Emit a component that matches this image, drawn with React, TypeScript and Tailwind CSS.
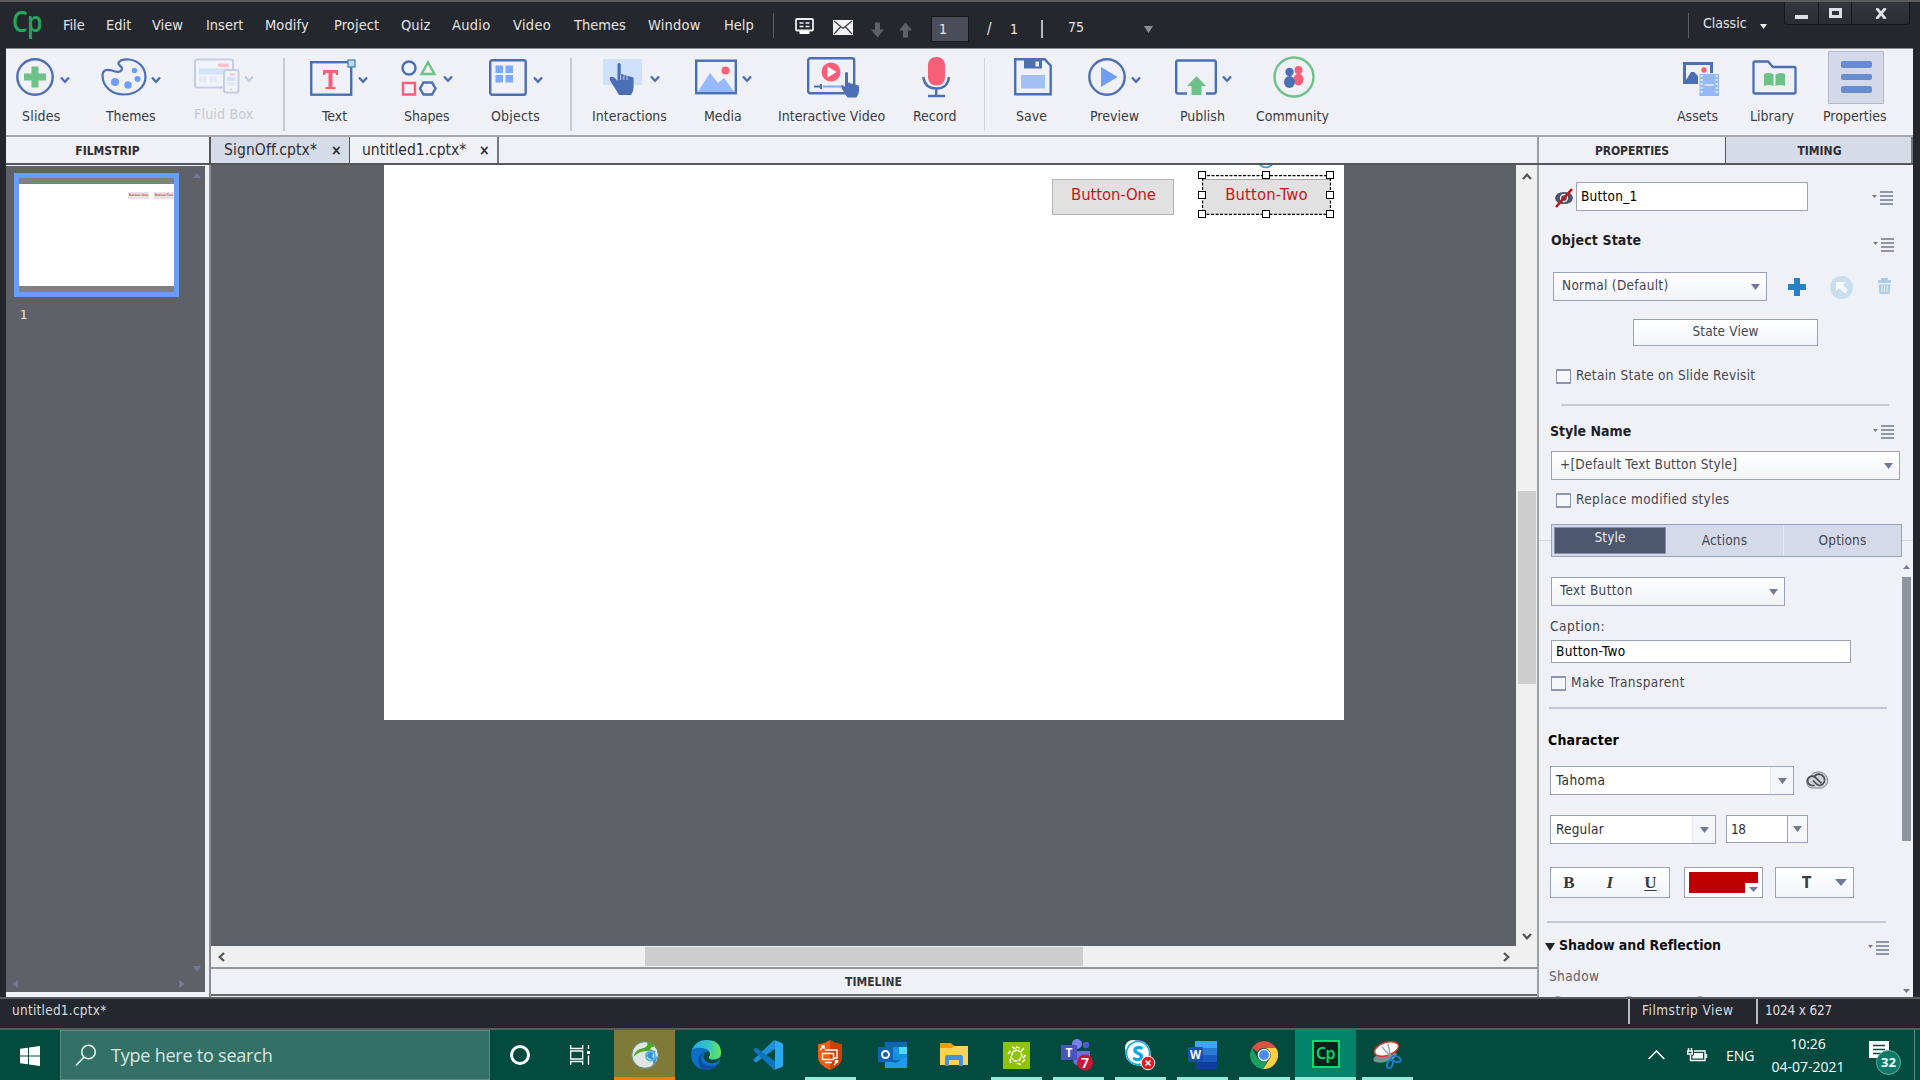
import React from "react";

type Kids = { children?: React.ReactNode; className?: string };

const BLUE = "#4a6fb5";
const GREEN = "#6cc287";
const RED = "#f75f78";

/* ---------- small shared pieces ---------- */

function Chevron({ className = "", color = BLUE }: { className?: string; color?: string }) {
  return (
    <svg className={"shrink-0 " + className} width="10" height="8" viewBox="0 0 10 8" fill="none" stroke={color} strokeWidth="2.4">
      <path d="M1 1.5 5 5.8 9 1.5" />
    </svg>
  );
}

function Caret({ className = "", w = 9, h = 6, color = "#6f7a98" }: { className?: string; w?: number; h?: number; color?: string }) {
  return (
    <svg className={"shrink-0 " + className} width={w} height={h} viewBox="0 0 10 7" preserveAspectRatio="none">
      <path d="M0 0h10L5 7z" fill={color} />
    </svg>
  );
}

function ListMenu({ className = "" }: { className?: string }) {
  return (
    <svg className={"shrink-0 " + className} width="22" height="14" viewBox="0 0 22 14">
      <path d="M0 4h5L2.5 7z" fill="#6f7a98" />
      <path d="M8 1h13M8 5h13M8 9h13M8 13h13" stroke="#6f7890" strokeWidth="1.3" />
    </svg>
  );
}

function Check({ className = "" }: { className?: string }) {
  return <div className={"size-[15px] shrink-0 border border-[#8e96ae] border-y-2 bg-[#f6f7fb] " + className} />;
}

function Rule({ className = "" }: { className?: string }) {
  return <div className={"h-[2px] shrink-0 bg-[#c6c9d4] " + className} />;
}

function Select({ className = "", children }: Kids) {
  return (
    <div className={"flex h-[29px] shrink-0 items-center justify-between border border-[#99a2b9] bg-linear-to-b from-white to-[#f1f3f8] pr-[6px] pl-[8px] leading-[26px] " + className}>
      <span className="-mt-[3px] whitespace-nowrap">{children}</span>
      <Caret />
    </div>
  );
}

/* ---------- title bar ---------- */

function TitleBar() {
  return (
    <header className="flex h-[48px] shrink-0 items-start border-t-2 border-[#5b5b5d] bg-[#24272e] text-[15px] leading-[20px] text-[#e4e4e4]">
      <div className="mt-[3px] ml-[12px] w-[51px] font-['Open_Sans'] text-[29px] leading-[32px] font-semibold tracking-[-1px] text-[#26a65b]">
        <span className="inline-block origin-left scale-x-[.86]">Cp</span>
      </div>
      <nav className="mt-[13px] flex h-[20px] text-[14.5px]">
        <span className="w-[43px]">File</span>
        <span className="w-[46px]">Edit</span>
        <span className="w-[54px]">View</span>
        <span className="w-[59px]">Insert</span>
        <span className="w-[69px] tracking-[.1px]">Modify</span>
        <span className="w-[67px] tracking-[.1px]">Project</span>
        <span className="w-[51px] tracking-[.1px]">Quiz</span>
        <span className="w-[61px] tracking-[.3px]">Audio</span>
        <span className="w-[61px] tracking-[.3px]">Video</span>
        <span className="w-[74px]">Themes</span>
        <span className="w-[76px] tracking-[.2px]">Window</span>
        <span className="w-[49px]">Help</span>
      </nav>
      <div className="mt-[11px] h-[25px] w-px bg-[#5c5e64]" />
      <svg className="mt-[16px] ml-[21px]" width="19" height="17" viewBox="0 0 19 17">
        <rect x="1" y="1" width="17" height="11.500" rx="1" fill="none" stroke="#eee" strokeWidth="1.8" />
        <path d="M4.500 5h4M10.500 5h4M4.500 8.500h4M10.500 8.500h4" stroke="#eee" strokeWidth="1.7" />
        <path d="M4.500 13h10v3h-10z" fill="#fff" />
      </svg>
      <svg className="mt-[18px] ml-[19px]" width="20" height="15" viewBox="0 0 20 15">
        <rect width="20" height="15" fill="#f2f2f2" />
        <path d="M1 1l9 7.500L19 1M1 14l6.500-7M19 14l-6.500-7" fill="none" stroke="#3a3c42" strokeWidth="1.2" />
      </svg>
      <svg className="mt-[20px] ml-[18px]" width="13" height="16" viewBox="0 0 13 15"><path d="M4 0h5v7h4l-6.500 8L0 7h4z" fill="#5f6065" /></svg>
      <svg className="mt-[20px] ml-[15px]" width="13" height="16" viewBox="0 0 13 15"><path d="M4 15h5V8h4L6.500 0 0 8h4z" fill="#5f6065" /></svg>
      <div className="mt-[14px] ml-[19px] h-[26px] w-[38px] border border-[#15171b] bg-[#4b4e5a] pl-[7px] text-[14px] leading-[24px]">1</div>
      <span className="mt-[17px] ml-[18px] w-[23px]">/</span>
      <span className="mt-[17px] w-[31px] text-[14px]">1</span>
      <div className="mt-[18px] h-[18px] w-[2px] bg-[#b8b8ba]" />
      <span className="mt-[15px] ml-[25px] w-[76px] text-[14px]">75</span>
      <Caret className="mt-[24px]" color="#8e9096" w={9} h={7} />
      <div className="mt-[11px] ml-[535px] h-[25px] w-px bg-[#5c5e64]" />
      <span className="mt-[11px] ml-[14px] w-[57px] text-[14px]">Classic</span>
      <Caret className="mt-[22px]" color="#eee" w={7} h={5} />
      <div className="ml-[17px] flex h-[23px] w-[126px] divide-x divide-[#16181c] rounded-b-sm border border-t-0 border-[#16181c] bg-linear-to-b from-[#33383e] to-[#2a2d33]">
        <div className="flex w-[34px] items-end justify-center pr-[1px] pb-[5px]"><div className="h-[4px] w-[13px] bg-[#dde0e8]" /></div>
        <div className="flex w-[33px] items-center justify-center"><div className="h-[10px] w-[13px] border-[3px] border-[#dde0e8]" /></div>
        <div className="flex flex-1 items-center justify-center">
          <svg width="12" height="11" viewBox="0 0 12 11" stroke="#dde0e8" strokeWidth="2.800"><path d="M1.500 0l9 11M10.500 0l-9 11" /></svg>
        </div>
      </div>
    </header>
  );
}

/* ---------- tool bar ---------- */

function Tool({ className = "", iconClass = "", labelClass = "", label, arrow, arrowColor, icon }: {
  className?: string; iconClass?: string; labelClass?: string; label: string; arrow?: string; arrowColor?: string; icon: React.ReactNode;
}) {
  return (
    <div className={"flex shrink-0 flex-col " + className}>
      <div className={"flex h-[54px] items-center " + iconClass}>
        {icon}
        {arrow !== undefined && <Chevron className={arrow} color={arrowColor} />}
      </div>
      <span className={"leading-[24px] whitespace-nowrap " + labelClass}>{label}</span>
    </div>
  );
}

function IconSlides() {
  return (
    <svg width="38" height="38" viewBox="0 0 38 38">
      <circle cx="19" cy="19" r="17.700" fill="none" stroke={BLUE} strokeWidth="2.400" />
      <path d="M15.500 8.500h7v7h7.500v7h-7.500v7h-7v-7H8v-7h7.500z" fill={GREEN} />
    </svg>
  );
}
function IconPalette() {
  return (
    <svg width="46" height="38" viewBox="0 0 46 38">
      <path d="M17.500 5C19 1.500 23 1.200 28 1.500 38 2.500 44.500 10 44.500 19 44.500 29 35 36.500 23 36.500 11 36.500 2 29 1.500 18 1.500 11.500 6 11 11 12.500 16 14.500 20 14.500 21 11 21.500 8 17 8 17.500 5Z" fill="none" stroke={BLUE} strokeWidth="2.200" />
      <circle cx="14" cy="24" r="4" fill="#6f9df8" /><circle cx="27" cy="27" r="3.700" fill="#6f9df8" />
      <circle cx="36.500" cy="21" r="3" fill="#6f9df8" /><circle cx="33.500" cy="12.500" r="2.700" fill="#6f9df8" />
    </svg>
  );
}
function IconFluid() {
  return (
    <svg width="46" height="36" viewBox="0 0 46 36">
      <rect x="1" y="1.500" width="38" height="28" rx="2" fill="#f3f4f9" stroke="#c3cde3" strokeWidth="2" />
      <rect x="24" y="5.500" width="11" height="3.500" fill="#f8c3cf" /><rect x="5" y="10.500" width="30" height="6" fill="#d3e1fa" />
      <path d="M5 18.500h8v6H5zM15 18.500h8v6h-8z" fill="#e2eafa" />
      <rect x="30" y="12" width="14.500" height="22.500" rx="2" fill="#f3f4f9" stroke="#c3cde3" strokeWidth="2" />
      <rect x="36" y="15.500" width="5" height="2" fill="#f8c3cf" /><rect x="33" y="19" width="8.500" height="4" fill="#d3e1fa" />
      <rect x="33" y="24" width="8.500" height="4" fill="#e2eafa" /><circle cx="37.300" cy="31.300" r="1" fill="#c3cde3" />
    </svg>
  );
}
function IconText() {
  return (
    <svg width="46" height="37" viewBox="0 0 46 37">
      <rect x="1.200" y="3.200" width="40" height="32.500" fill="none" stroke={BLUE} strokeWidth="2.400" />
      <path d="M13 11h15v5h-2l-.5-2h-3v14h3v2h-10v-2h3V14h-3L15 16h-2z" fill={RED} />
      <rect x="38" y="1" width="7" height="7" fill="#b8daf2" stroke="#4b86ad" strokeWidth="1.300" />
    </svg>
  );
}
function IconShapes() {
  return (
    <svg width="36" height="36" viewBox="0 0 36 36" fill="none" strokeWidth="2.400">
      <circle cx="8" cy="8" r="6.500" stroke={BLUE} /><path d="M27 2.500 33.500 14h-13z" stroke={GREEN} />
      <path d="M2 23h12v11.500H2z" stroke={RED} /><path d="M22.500 22.500h8.500l3.500 6-3.500 6h-8.500l-3.500-6z" stroke={BLUE} />
    </svg>
  );
}
function IconObjects() {
  return (
    <svg width="38" height="37" viewBox="0 0 38 37">
      <rect x="1.200" y="1.200" width="35.500" height="34.500" rx="2" fill="none" stroke={BLUE} strokeWidth="2.400" />
      <path d="M6.500 6.500H14V14H6.500zM16.500 6.500H24V14h-7.500zM6.500 16H14v7.500H6.500zM16.500 16H24v7.500h-7.500z" fill="#7ea8fa" />
    </svg>
  );
}
function IconInteractions() {
  return (
    <svg width="40" height="38" viewBox="0 0 40 38">
      <rect width="39" height="26" y="1" fill="#cfe0fd" />
      <path d="M14.500 6q1.600-2 3.200 0v10.500q2.500-1.500 3.200 1 2.400-1 3.200 1 2.500-1 3 .5 3.500-1 3.500 2v8q0 4-2.500 8h-12L8 24q-2.500-4-.5-5 3-1 7 4z" fill={BLUE} />
      <path d="M17.700 17v5M20.900 18v4M24.100 18.500v3.500" stroke="#cfe0fd" strokeWidth=".9" />
    </svg>
  );
}
function IconMedia() {
  return (
    <svg width="42" height="36" viewBox="0 0 42 36">
      <path d="M2 34 15 14l8 10 6-5 11 15z" fill="#96bafd" />
      <rect x="1.200" y="1.700" width="39.600" height="32.500" fill="none" stroke={BLUE} strokeWidth="2.400" />
      <circle cx="30.500" cy="11.500" r="4" fill={RED} />
    </svg>
  );
}
function IconInteractiveVideo() {
  return (
    <svg width="53" height="42" viewBox="0 0 53 42">
      <rect x="1.200" y="2.200" width="46" height="35" rx="2" fill="none" stroke={BLUE} strokeWidth="2.400" />
      <circle cx="24" cy="16" r="9.500" fill={RED} /><path d="M20.500 10.500 29.500 16l-9 5.500z" fill="#fff" />
      <path d="M7 30.500h8M14 28v5" stroke={BLUE} strokeWidth="2" /><path d="M16 30.500h18" stroke="#7ea8fa" strokeWidth="2" />
      <path d="M38 17q1.300-2 3 0v10q2-1.300 2.700.7 2-.8 2.700.8 2-.7 2.600.5 3-.5 3 2v4q0 3-2.500 6.500h-9l-5.500-8.500q-1.500-3-.5-4 2 0 3.500 2z" fill={BLUE} />
    </svg>
  );
}
function IconRecord() {
  return (
    <svg width="28" height="42" viewBox="0 0 28 42">
      <rect x="6" y="1" width="17" height="28.500" rx="8" fill={RED} />
      <path d="M1.300 21q1.500 11.500 13 11.500T27 21M14.200 32v7M6 40h17" fill="none" stroke={BLUE} strokeWidth="2.400" />
    </svg>
  );
}
function IconSave() {
  return (
    <svg width="38" height="38" viewBox="0 0 38 38">
      <path d="M1.200 1.200h29.500l6 6.500v28.500H1.200z" fill="none" stroke={BLUE} strokeWidth="2.400" />
      <path d="M10 1h18v9.500H10z" fill={BLUE} /><path d="M21.500 3.500h3.500v5h-3.500z" fill="#f0f1f7" />
      <path d="M7 17h24v13.500H7z" fill="#a3c0f4" />
    </svg>
  );
}
function IconPreview() {
  return (
    <svg width="38" height="38" viewBox="0 0 38 38">
      <circle cx="19" cy="19" r="17.700" fill="none" stroke={BLUE} strokeWidth="2.400" /><path d="M13 9v20l16.500-10z" fill="#6f9df8" />
    </svg>
  );
}
function IconPublish() {
  return (
    <svg width="42" height="37" viewBox="0 0 42 37">
      <path d="M12 34.500H3q-1.800 0-1.800-1.800V3.300Q1.200 1.500 3 1.500h36q1.800 0 1.800 1.800v29.400q0 1.800-1.800 1.800H31" fill="none" stroke={BLUE} strokeWidth="2.400" />
      <path d="M21.500 17 31 27h-4.500v9h-10v-9H12z" fill={GREEN} />
    </svg>
  );
}
function IconCommunity() {
  return (
    <svg width="42" height="42" viewBox="0 0 42 42">
      <circle cx="21" cy="21" r="19.500" fill="none" stroke={GREEN} strokeWidth="2.400" />
      <circle cx="25.500" cy="14" r="4" fill={RED} /><ellipse cx="25.500" cy="23.500" rx="5" ry="6" fill={RED} />
      <circle cx="16.500" cy="16" r="4.200" fill={BLUE} /><ellipse cx="16.500" cy="26" rx="5.500" ry="6" fill={BLUE} />
    </svg>
  );
}
function IconAssets() {
  return (
    <svg width="36" height="34" viewBox="0 0 36 34">
      <path d="M0 0h30v11h-3V3H3v15l5-8h3l4 4v8H0z" fill={BLUE} /><circle cx="21" cy="8" r="2.700" fill={RED} />
      <path d="M16.500 12H36v22H16.500z" fill="#94b8fa" />
      <path d="M18.700 13v20M33.700 13v20" stroke="#e7effd" strokeWidth="2" strokeDasharray="2 2" /><path d="M21.500 23h9.500" stroke="#e7effd" strokeWidth="1.500" />
    </svg>
  );
}
function IconLibrary() {
  return (
    <svg width="45" height="35" viewBox="0 0 45 35">
      <path d="M1.500 33V3q0-1.500 1.500-1.500h13l5 5.500h21q1.500 0 1.500 1.500V32q0 1.500-1.500 1.500H3q-1.500 0-1.500-1.500z" fill="none" stroke={BLUE} strokeWidth="2.300" />
      <path d="M12 14q5-2 9.500.5v11.500Q17 24 12 26zM23.500 14.500Q28 12 33 14v12q-5-2-9.500 0z" fill={GREEN} />
    </svg>
  );
}

function ToolBar() {
  const sep = "mt-[8px] h-[73px] w-[2px] shrink-0 bg-[#c8cad2]";
  return (
    <div className="ml-[6px] flex h-[89px] shrink-0 border-t border-b-2 border-t-[#8b8c8f] border-b-[#a9a9ab] bg-[#f0f1f7] pt-px pl-[10px] text-[14px] text-[#3a3b40]">
      <Tool className="w-[85px]" labelClass="pl-[6px] tracking-[.2px]" label="Slides" icon={<IconSlides />} arrow="mt-[5px] ml-[6px]" />
      <Tool className="w-[93px]" labelClass="pl-[5px] tracking-[-.1px]" label="Themes" icon={<IconPalette />} arrow="mt-[5px] ml-[4px]" />
      <Tool className="w-[89px]" iconClass="-mt-px" labelClass="-mt-[1px] text-[#c6c9d1] tracking-[.2px]" label="Fluid Box" icon={<IconFluid />} arrow="mt-[5px] ml-[4px]" arrowColor="#c3cde3" />
      <div className={sep} />
      <Tool className="ml-[25px] w-[91px]" iconClass="pt-[1px]" labelClass="pl-[12px]" label="Text" icon={<IconText />} arrow="mt-[5px] ml-[2px]" />
      <Tool className="w-[88px]" iconClass="pt-[1px]" labelClass="pl-[3px] tracking-[-.1px]" label="Shapes" icon={<IconShapes />} arrow="mt-[2px] ml-[6px]" />
      <Tool className="w-[81px]" iconClass="pt-[1px]" labelClass="pl-[2px] tracking-[.2px]" label="Objects" icon={<IconObjects />} arrow="mt-[4px] ml-[6px]" />
      <div className={sep} />
      <Tool className="ml-[19px] w-[104px]" iconClass="pl-[12px]" labelClass="pl-px" label="Interactions" icon={<IconInteractions />} arrow="mt-[4px] ml-[7px]" />
      <Tool className="w-[83px]" labelClass="pl-[9px]" label="Media" icon={<IconMedia />} arrow="mt-[3px] ml-[5px]" />
      <Tool className="w-[135px]" iconClass="pl-[29px]" label="Interactive Video" icon={<IconInteractiveVideo />} />
      <Tool className="w-[71px]" iconClass="pl-[9px]" label="Record" icon={<IconRecord />} />
      <div className="mt-[8px] h-[73px] w-px shrink-0 bg-[#d2d4dc]" />
      <Tool className="ml-[29px] w-[74px]" labelClass="pl-[2px]" label="Save" icon={<IconSave />} />
      <Tool className="w-[87px]" labelClass="pl-[2px]" label="Preview" icon={<IconPreview />} arrow="mt-[6px] ml-[5px]" />
      <Tool className="w-[81px]" labelClass="pl-[5px]" label="Publish" icon={<IconPublish />} arrow="mt-[4px] ml-[5px]" />
      <Tool className="w-[420px]" iconClass="pl-[17px]" label="Community" icon={<IconCommunity />} />
      <Tool className="w-[74px]" iconClass="pt-[3px] pl-[7px]" labelClass="pl-px" label="Assets" icon={<IconAssets />} />
      <Tool className="w-[73px]" iconClass="pt-[1px] pl-[2px]" labelClass="" label="Library" icon={<IconLibrary />} />
      <Tool
        iconClass="pl-[5px]"
        label="Properties"
        icon={
          <div className="flex h-[53px] w-[56px] flex-col items-center justify-center gap-[6px] border border-[#b4b9cb] bg-[#d3d9ea]">
            <div className="h-[7px] w-[31px] rounded-xs bg-[#668dd0]" />
            <div className="h-[6px] w-[31px] rounded-xs bg-[#668dd0]" />
            <div className="h-[7px] w-[31px] rounded-xs bg-[#668dd0]" />
          </div>
        }
      />
    </div>
  );
}

/* ---------- panel headers ---------- */

function TabStrip() {
  return (
    <div className="ml-[6px] flex h-[28px] shrink-0 border-b-2 border-[#55565a] bg-[#f0f1f7] text-[#2d2e32]">
      <div className="w-[205px] border-r-2 border-[#55565a] text-center text-[12px] leading-[28px] font-bold">FILMSTRIP</div>
      <div className="flex w-[139px] border-r border-[#55565a] bg-[#d6dbe8] pl-[13px] text-[15.500px] leading-[26px]">
        <span className="w-[107px] tracking-[.1px]">SignOff.cptx*</span><span className="text-[14px] font-bold">×</span>
      </div>
      <div className="flex w-[149px] border-r-2 border-[#77787c] pl-[12px] text-[15.500px] leading-[26px]">
        <span className="w-[117px]">untitled1.cptx*</span><span className="text-[14px] font-bold">×</span>
      </div>
      <div className="flex-1" />
      <div className="w-[189px] border-r border-l-2 border-r-[#55565a] border-l-[#a0a0a4] text-center text-[12px] leading-[28px] font-bold tracking-[-.1px]">PROPERTIES</div>
      <div className="w-[187px] border-r-2 border-[#77787c] bg-[#d6dbe8] pl-[2px] text-center text-[12px] leading-[28px] font-bold">TIMING</div>
    </div>
  );
}

/* ---------- filmstrip ---------- */

function Filmstrip() {
  const tri = "#70799a";
  return (
    <aside className="flex w-[203px] shrink-0 bg-[#f0f1f7] pt-px pb-[5px]">
      <div className="flex w-[199px] flex-col bg-[#5f6169]">
        <div className="flex">
          <div className="mt-[7px] ml-[8px] h-[124px] w-[165px] border-[5px] border-[#6c9bff] bg-[#808080] py-[6px]">
            <div className="flex h-[102px] justify-end gap-[5px] bg-white pt-[8px] text-[3.300px] leading-[7px] font-bold text-[#d0555a]">
              <span className="h-[7px] w-[21px] bg-[#e4e4e4] text-center text-nowrap">Button-One</span>
              <span className="h-[7px] w-[20px] bg-[#e4e4e4] text-center text-nowrap">Button-Two</span>
            </div>
          </div>
          <Caret className="mt-[7px] ml-[14px] rotate-180" w={8} h={5} color={tri} />
        </div>
        <span className="mt-[8px] ml-[14px] text-[13px] leading-[20px] text-[#f0f0f0]">1</span>
        <Caret className="mt-auto ml-[187px]" w={8} h={6} color={tri} />
        <div className="mt-[8px] mb-[4px] flex justify-between pr-[20px] pl-[6px]">
          <svg width="6" height="8"><path d="M6 0v8L0 4z" fill={tri} /></svg>
          <svg width="6" height="8"><path d="M0 0v8l6-4z" fill={tri} /></svg>
        </div>
      </div>
    </aside>
  );
}

/* ---------- stage ---------- */

function Handle({ className = "" }: { className?: string }) {
  return <div className={"absolute size-[8px] border border-black bg-white " + className} />;
}

function Stage() {
  return (
    <main className="flex w-[1328px] shrink-0 flex-col border-l-2 border-[#8b8c90] bg-[#f0f1f7]">
      <div className="flex h-[781px]">
        <div className="relative w-[1305px] overflow-hidden bg-[#5f6169] pl-[173px]">
          <div className="relative h-[555px] w-[960px] bg-white">
            <div className="absolute top-[14px] left-[668px] h-[36px] w-[122px] border border-[#b2b2b2] bg-[#e1e1e1] pl-px text-center text-[16.500px] leading-[29px] tracking-[-.1px] text-[#c91519]">Button-One</div>
            <svg className="absolute -top-[14px] left-[873px]" width="18" height="18"><circle cx="9" cy="9" r="7.500" fill="none" stroke="#4a95d4" strokeWidth="2" /></svg>
            <div className="absolute top-[10px] left-[818px] h-[40px] w-[129px] border border-black bg-white">
              <div className="absolute inset-0 mt-[3px] border-t border-[#a8a8a8] bg-[#e1e1e1] text-center text-[16.500px] leading-[29px] tracking-[.15px] text-[#c91519]">Button-Two</div>
              <svg className="absolute -top-px -left-px" width="129" height="40"><rect x=".5" y=".5" width="128" height="39" fill="none" stroke="#fff" /><rect x=".5" y=".5" width="128" height="39" fill="none" stroke="#000" strokeWidth="1.300" strokeDasharray="3 1.500" /></svg>
              <Handle className="-top-[5px] -left-[5px]" /><Handle className="-top-[5px] left-[59px]" /><Handle className="-top-[5px] -right-[4px]" />
              <Handle className="top-[15px] -left-[5px]" /><Handle className="top-[15px] -right-[4px]" />
              <Handle className="-bottom-[4px] -left-[5px]" /><Handle className="-bottom-[4px] left-[59px]" /><Handle className="-right-[4px] -bottom-[4px]" />
            </div>
          </div>
        </div>
        <div className="flex w-[21px] flex-col items-center bg-[#f0f0f0] pt-[8px] pb-[6px]">
          <svg width="10" height="7" fill="none" stroke="#555" strokeWidth="2.200"><path d="M1 6l4-4.300L9 6" /></svg>
          <div className="mt-[311px] h-[193px] w-[18px] bg-[#cdcdcd]" />
          <svg className="mt-auto" width="10" height="7" fill="none" stroke="#555" strokeWidth="2.200"><path d="M1 1l4 4.300L9 1" /></svg>
        </div>
      </div>
      <div className="flex h-[23px] items-center border-b-2 border-[#98989a] bg-[#f0f0f0] pr-[27px] pl-[7px]">
        <svg width="7" height="10" fill="none" stroke="#555" strokeWidth="2.200"><path d="M6 1 1.700 5 6 9" /></svg>
        <div className="ml-[420px] h-[19px] w-[438px] bg-[#cdcdcd]" />
        <svg className="ml-auto" width="7" height="10" fill="none" stroke="#555" strokeWidth="2.200"><path d="M1 1l4.300 4L1 9" /></svg>
      </div>
      <div className="h-[27px] border-b-2 border-[#66676b] pr-px text-center text-[12px] leading-[27px] font-bold text-[#34353b]">TIMELINE</div>
    </main>
  );
}

/* ---------- properties ---------- */

function Properties() {
  const heading = "font-bold text-[14px] leading-[20px] text-[#1e1f24]";
  return (
    <aside className="flex h-[832px] w-[376px] shrink-0 flex-col overflow-hidden border-l-2 border-[#a0a0a4] bg-[#f0f1f7] text-[13.500px] leading-[20px] tracking-[.14px] text-[#44464f]">
      <div className="mt-[17px] flex pl-[16px]">
        <svg className="mt-[6px]" width="19" height="20" viewBox="0 0 19 20">
          <path d="M0 10Q1 4 9 4t9 6q-1 6-9 6t-9-6z" fill="#4c5468" /><circle cx="9" cy="10" r="3.500" fill="none" stroke="#f0f1f7" strokeWidth="1.300" /><path d="M1 19 17 1" stroke="#c3141b" strokeWidth="2.600" />
        </svg>
        <div className="ml-[2px] h-[29px] w-[232px] border border-[#99a2b9] bg-white pl-[4px] leading-[26px] tracking-[.25px] text-black">Button_1</div>
        <ListMenu className="mt-[9px] ml-[64px]" />
      </div>
      <div className="mt-[19px] flex pl-[12px]"><span className={heading + " w-[322px]"}>Object State</span><ListMenu className="mt-[8px]" /></div>
      <div className="mt-[20px] flex pl-[14px]">
        <Select className="w-[214px] tracking-[.3px]">Normal (Default)</Select>
        <svg className="mt-[6px] ml-[21px]" width="18" height="18"><path d="M6 0h6v6h6v6h-6v6H6v-6H0V6h6z" fill="#2781c6" /></svg>
        <svg className="mt-[4px] ml-[24px]" width="23" height="23" viewBox="0 0 23 23"><circle cx="11.500" cy="11.500" r="11.500" fill="#c9dff0" /><path d="M6 6h10l-3 3 5 5-3 3.500-6-5L6 15z" fill="#f5f8fc" /></svg>
        <svg className="mt-[6px] ml-[24px]" width="15" height="16" viewBox="0 0 15 16" fill="#a9cdea"><path d="M4 0h7v2h3v3H1V2h3zM1.500 6.500h12L12.500 16h-10z" /><path d="M5 8v6M7.500 8v6M10 8v6" stroke="#f0f1f7" /></svg>
      </div>
      <div className="mt-[18px] ml-[94px] h-[27px] w-[185px] shrink-0 border border-[#99a2b9] bg-linear-to-b from-white to-[#f3f5fa] text-center leading-[23px]">State View</div>
      <div className="mt-[19px] flex pl-[17px]"><Check className="mt-[4px]" /><span className="ml-[5px] tracking-[.28px]">Retain State on Slide Revisit</span></div>
      <Rule className="mt-[19px] ml-[22px] w-[328px]" />
      <div className="mt-[15px] flex pl-[11px]"><span className={heading + " w-[323px] tracking-[0px]"}>Style Name</span><ListMenu className="mt-[4px]" /></div>
      <Select className="mt-[10px] ml-[12px] w-[349px] tracking-[.22px]">+[Default Text Button Style]</Select>
      <div className="mt-[9px] flex pl-[17px]"><Check className="mt-[4px]" /><span className="ml-[5px] tracking-[.4px]">Replace modified styles</span></div>
      <div className="mt-[15px] flex items-center">
        <div className="h-px w-[12px] bg-[#d6d7dd]" />
        <div className="flex h-[33px] w-[351px] items-center border border-[#98a0ba] bg-[#d5daeb] text-center">
          <div className="ml-[2px] h-[27px] w-[112px] border border-[#8992aa] bg-[#4d5770] leading-[19px] text-[#e9ebf2]">Style</div>
          <div className="w-[118px] border-r border-[#e6e9f4] leading-[31px]">Actions</div>
          <div className="flex-1 leading-[31px]">Options</div>
        </div>
        <div className="h-px flex-1 bg-[#d6d7dd]" />
      </div>
      <div className="flex h-[440px] shrink-0">
        <div className="flex w-[363px] flex-col">
          <Select className="mt-[20px] ml-[12px] w-[234px] tracking-[.35px]">Text Button</Select>
          <span className="mt-[10px] ml-[11px] tracking-[.5px]">Caption:</span>
          <div className="mt-[4px] ml-[12px] h-[24px] w-[300px] border border-[#99a2b9] bg-white pl-[4px] leading-[21px] tracking-[.3px] text-black">Button-Two</div>
          <div className="mt-[9px] flex pl-[12px]"><Check className="mt-[4px]" /><span className="ml-[5px] tracking-[.4px]">Make Transparent</span></div>
          <Rule className="mt-[15px] ml-[10px] w-[338px]" />
          <span className={heading + " mt-[21px] ml-[9px] text-black"}>Character</span>
          <div className="mt-[16px] flex items-start pl-[11px] text-[#2f3036]">
            <div className="flex h-[29px] w-[244px] border border-[#99a2b9] bg-white pl-[5px] leading-[26px] tracking-[.4px]"><span className="flex-1">Tahoma</span><div className="flex w-[23px] items-center justify-center border-l border-[#e6e8ef] bg-[#f5f6fa]"><Caret /></div></div>
            <svg className="mt-[5px] ml-[11px]" width="24" height="18" viewBox="0 0 24 18" fill="none" strokeLinecap="round">
              <path d="M7 17A6.200 6.200 0 0 1 5.800 5Q8 1 13 .8 19 .6 22 6q3 8-5 11z" fill="#d0d1d6" stroke="#85868b" />
              <path d="M9 14.500H7.500A4.700 4.700 0 1 1 11 7l5 5M9.500 5.300a5.700 5.700 0 1 1 5.500 9.200q-2 0-4-2L8.500 10" stroke="#4b4c50" strokeWidth="1.700" />
            </svg>
          </div>
          <div className="mt-[20px] flex items-start pl-[11px] text-[#2f3036]">
            <div className="flex h-[29px] w-[166px] border border-[#99a2b9] bg-white pl-[5px] leading-[26px] tracking-[.2px]"><span className="flex-1">Regular</span><div className="flex w-[23px] items-center justify-center border-l border-[#e6e8ef] bg-[#f5f6fa]"><Caret /></div></div>
            <div className="ml-[10px] flex h-[28px] w-[82px] border border-[#99a2b9] bg-white pl-[4px] leading-[26px] tracking-[-.4px]"><span className="flex-1">18</span><div className="flex w-[20px] items-center justify-center border-l border-[#99a2b9] bg-[#f5f6fa]"><Caret /></div></div>
          </div>
          <div className="mt-[23px] flex pl-[11px]">
            <div className="flex h-[31px] w-[120px] border border-[#99a2b9] bg-linear-to-b from-white to-[#f3f5fa] font-['Liberation_Serif'] text-[17px] leading-[29px] font-bold text-[#3a3b40]">
              <span className="w-[36px] text-center">B</span><span className="w-[46px] text-center italic">I</span><span className="w-[35px] text-center underline underline-offset-2">U</span>
            </div>
            <div className="ml-[14px] flex h-[31px] w-[79px] border border-[#99a2b9] bg-white p-[4px]">
              <div className="flex h-[21px] flex-1 items-end justify-end bg-[#bf0000]"><div className="flex h-[10px] w-[13px] items-end justify-end bg-white pb-px"><Caret w={9} h={5} /></div></div>
            </div>
            <div className="ml-[12px] flex h-[31px] w-[79px] items-center border border-[#99a2b9] bg-linear-to-b from-white to-[#f3f5fa] text-[#3a3b40]"><span className="ml-[26px] w-[33px] text-[15px] font-semibold">T</span><Caret w={12} h={7} /></div>
          </div>
          <Rule className="mt-[23px] ml-[8px] w-[339px]" />
          <div className="mt-[12px] flex pl-[6px]"><Caret className="mt-[8px]" w={10} h={8} color="#222" /><span className="ml-[4px] w-[309px] text-[14px] font-bold tracking-[-.05px] text-[#101014]">Shadow and Reflection</span><ListMenu className="mt-[6px]" /></div>
          <span className="mt-[11px] ml-[10px] tracking-[.4px] text-[#5d5f68]">Shadow</span>
          <div className="mt-[10px] flex gap-[61px] pl-[14px]">
            <div className="size-[10px] shrink-0 rounded-full border-2 border-[#9aa1b5]" /><div className="size-[10px] shrink-0 rounded-full border-2 border-[#9aa1b5]" /><div className="size-[10px] shrink-0 rounded-full border-2 border-[#9aa1b5]" />
          </div>
        </div>
        <div className="flex flex-col items-center pt-[8px] pb-[4px]">
          <Caret className="rotate-180" w={7} h={4} /><div className="mt-[8px] h-[264px] w-[9px] bg-[#8f94a1]" /><Caret className="mt-auto" w={7} h={4} />
        </div>
      </div>
    </aside>
  );
}

/* ---------- status bar ---------- */

function StatusBar() {
  return (
    <footer className="flex h-[33px] shrink-0 border-t-2 border-b-2 border-[#5b5b5e] bg-[#24272e] text-[13.500px] leading-[23px] text-[#dcdcde]">
      <span className="ml-[12px] w-[1616px] tracking-[.25px]">untitled1.cptx*</span>
      <div className="h-[25px] w-[2px] bg-[#b9babe]" /><span className="ml-[12px] w-[114px] tracking-[.5px]">Filmstrip View</span>
      <div className="h-[25px] w-[2px] bg-[#b9babe]" /><span className="ml-[7px] tracking-[-.2px]">1024 x 627</span>
    </footer>
  );
}

/* ---------- Windows task bar ---------- */

function TaskApp({ children, className = "w-[62px]", open = false }: Kids & { open?: boolean }) {
  return (
    <div className={"flex h-[50px] shrink-0 flex-col items-center " + className}>
      <div className="flex h-[47px] items-center pt-[3px]">{children}</div>
      {open && <div className="h-[3px] w-[51px] bg-[#94ead9]" />}
    </div>
  );
}

function TaskBar() {
  return (
    <div className="flex h-[51px] shrink-0 bg-[#024b3e] font-['Noto_Sans'] text-white">
      <div className="flex w-[60px] items-center justify-center">
        <svg width="20" height="20" viewBox="0 0 20 20" fill="#fff"><path d="M0 2.800 8 1.700v7.800H0zM9 1.500 20 0v9.500H9zM0 10.500h8v7.800L0 17.200zM9 10.500h11V20L9 18.500z" /></svg>
      </div>
      <div className="flex h-[50px] w-[430px] items-center border border-[#5b8c82] bg-[#337167] pl-[14px] text-[#d6e8e3]">
        <svg width="22" height="22" viewBox="0 0 22 22" fill="none" stroke="#eef6f4" strokeWidth="1.500"><circle cx="13.500" cy="8" r="6.800" /><path d="M9 13 1 21.500" /></svg>
        <span className="ml-[14px] font-['Open_Sans'] text-[18px] tracking-[-.22px]">Type here to search</span>
      </div>
      <div className="flex h-[50px] w-[60px] items-center justify-center"><div className="size-[20px] rounded-full border-[3px] border-white" /></div>
      <div className="flex h-[50px] w-[64px] items-center pl-[20px]">
        <svg width="21" height="20" viewBox="0 0 21 20" fill="none" stroke="#fff" strokeWidth="1.300"><path d="M.7 0v3.500h12V0M.7 20v-3.500h12V20M.7 6h12v8H.7zM18.500 0v4M18.500 10.500V20" /><path d="M17 6h3v3h-3z" fill="#fff" stroke="none" /></svg>
      </div>
      <TaskApp className="w-[61px] border-b-[3px] border-[#ff7a00] bg-[#807a39]">
        <svg width="28" height="28" viewBox="0 0 28 28">
          <circle cx="14" cy="14" r="13.300" fill="#dfe5e3" stroke="#5d8579" />
          <path d="M2 16Q5 8 11 7.500q3-.2 5-2.500 1-2 0-4 5 1 8 5-3-1-5 2 3 1 5 4-5-3-9-2-7 0-13 6z" fill="#4aa61c" />
          <path d="M25 10q-5-1-8 2-3 4 3 6 4 2 1 7 5-4 5-10-1 2-4 2-2-4 3-7z" fill="#2d95dc" />
          <circle cx="19.500" cy="15" r="4.500" fill="none" stroke="#5fb2e4" strokeWidth="2" />
        </svg>
      </TaskApp>
      <TaskApp>
        <svg width="30" height="30" viewBox="0 0 30 30">
          <defs><linearGradient id="edgeTop" x1="0" x2="1"><stop stopColor="#24a9e6" /><stop offset=".6" stopColor="#35c6c0" /><stop offset="1" stopColor="#69e84f" /></linearGradient></defs>
          <circle cx="15" cy="15" r="15" fill="#0f6fc6" /><path d="M1 10Q5 0 15 0q15 0 15 13 0 6-7 7-6 0-4-3 1-8-7-9Q4 7 1 10z" fill="url(#edgeTop)" /><path d="M12 12q-6 14 9 14 5 0 6-2-5 7-13 6Q5 27 8 17q2-5 8-4z" fill="#124f9e" /><path d="M16 11q-5 3-3 8 3 5 10 4 4-1 6-4 2-2 1-4-3 5-8 4-5 0-3-3 1-4-3-5z" fill="#024b3e" /><path d="M17 9q6 4 2 9 1 2 6 1 4-1 5-5 0 4-4 5-8 2-8-2 3-5-1-8z" fill="#69e84f" />
        </svg>
      </TaskApp>
      <TaskApp>
        <svg width="30" height="30" viewBox="0 0 30 30"><path d="M21 0 1 19q-1 1 0 2l2 1.500L23 8z" fill="#1d8fdc" /><path d="M21 30 1 11q-1-1 0-2l2-1.500L23 22z" fill="#0d75be" /><path d="M21 0l8 3q1 .5 1 2v20q0 1.500-1 2l-8 3q1-.5 1-3V3q0-2-1-3z" fill="#2aa8f0" /></svg>
      </TaskApp>
      <TaskApp open>
        <svg width="26" height="30" viewBox="0 0 26 30"><path d="M13 0Q19 4 25 4v13q0 8-12 13Q1 25 1 17V4q6 0 12-4z" fill="#f65a0c" /><path d="M13 0Q19 4 25 4v13q0 8-12 13z" fill="#cc3f05" /><path d="M5.500 13.500h11v6h-11zM8 22.500h7M8 10h12v8h-3M3 10l4-4M4 6h3v3M20 22l-3 3" fill="none" stroke="#fff" strokeWidth="1.400" /><circle cx="19.500" cy="21.500" r="1.800" fill="#fff" /></svg>
      </TaskApp>
      <TaskApp>
        <svg width="29" height="28" viewBox="0 0 29 28"><path d="M7 1h22v26H7z" fill="#1066b5" /><path d="M14 6h7v7h-7z" fill="#1d8fe0" /><path d="M21 6h8v7h-8z" fill="#50d9ff" /><path d="M14 13h15v6H14z" fill="#1490df" /><path d="m7 19 11 3 11-7v12H7z" fill="#1f9bea" /><rect y="6" width="15" height="15" rx="1" fill="#0f64b8" /><circle cx="7.500" cy="13.500" r="3.500" fill="none" stroke="#fff" strokeWidth="2" /></svg>
      </TaskApp>
      <TaskApp>
        <svg width="28" height="24" viewBox="0 0 28 24"><path d="M0 1h11l3 2h14v19H0z" fill="#ffd05c" /><path d="M0 0h11l3 3-2 2H0z" fill="#e3a008" /><path d="M5 23V14q0-2 2-2h14q2 0 2 2v9h-4v-6H9v6z" fill="#3f94dc" /></svg>
      </TaskApp>
      <TaskApp open>
        <svg width="27" height="27" viewBox="0 0 27 27">
          <path d="M0 0h27v27H0z" fill="#8fc400" />
          <path d="M10 9.500 14 8l4 2 1 4.500-3 4-5 .5-3-4zM9 5l5 2.500M21 6l-3 3.500M22.500 13l-3 4M18 22.500l-5-1.500M7.500 21l-.5-5M5 12l3-3.500M13 5l4 1M22 17.500l-3 3" fill="none" stroke="#fff" strokeWidth="1.500" strokeDasharray="4 1" />
        </svg>
      </TaskApp>
      <TaskApp open>
        <svg width="34" height="32" viewBox="0 0 34 32"><circle cx="16" cy="5" r="5" fill="#7b83eb" /><circle cx="25" cy="6" r="3.300" fill="#5059c9" /><path d="M12 12h17v7q-2 8-10 8-7 0-7-7z" fill="#6a70dc" /><rect y="6" width="16" height="15" rx="1" fill="#4b53bc" /><text x="8" y="18" textAnchor="middle" fontFamily="Noto Sans" fontWeight="700" fontSize="12" fill="#fff">T</text><circle cx="24" cy="23.500" r="8" fill="#c8163a" /><text x="24" y="28.500" textAnchor="middle" fontFamily="Noto Sans" fontWeight="600" fontSize="14" fill="#fff">7</text></svg>
      </TaskApp>
      <TaskApp open>
        <svg width="32" height="32" viewBox="0 0 32 32"><circle cx="9" cy="9" r="8" fill="#fff" /><circle cx="19" cy="19" r="8" fill="#fff" /><circle cx="14" cy="14" r="12.500" fill="#fff" /><circle cx="14" cy="14" r="11.500" fill="none" stroke="#14a5e8" strokeWidth="1.500" /><text x="14" y="21.500" textAnchor="middle" fontFamily="Noto Sans" fontWeight="800" fontSize="21" fill="#14a5e8">S</text><circle cx="24" cy="24" r="6.800" fill="#e21b23" stroke="#fff" /><path d="m21.500 21.500 5 5m0-5-5 5" stroke="#fff" strokeWidth="1.500" /></svg>
      </TaskApp>
      <TaskApp open>
        <svg width="29" height="28" viewBox="0 0 29 28"><path d="M7 0h22v7H7z" fill="#41a5ee" /><path d="M7 7h22v7H7z" fill="#2b7cd3" /><path d="M7 14h22v7H7z" fill="#185abd" /><path d="M7 21h22v7H7z" fill="#103f91" /><rect y="6" width="15" height="15" rx="1" fill="#1750b5" /><text x="7.500" y="18" textAnchor="middle" fontFamily="Noto Sans" fontWeight="700" fontSize="11.500" fill="#fff">W</text></svg>
      </TaskApp>
      <TaskApp open>
        <svg width="28" height="28" viewBox="0 0 28 28"><path d="M1.900 7A14 14 0 0 1 26.100 7H14a7 7 0 0 0-6.500 4z" fill="#dd5144" /><path d="M1.900 7a14 14 0 0 0 11 21l5-9a7 7 0 0 1-10-1.500z" fill="#1aa15f" /><path d="M26.100 7A14 14 0 0 1 13 28l6.800-10.500A7 7 0 0 0 14 7z" fill="#ffce43" /><circle cx="14" cy="14" r="6.300" fill="#f1f1f1" /><circle cx="14" cy="14" r="5" fill="#4c8bf5" /></svg>
      </TaskApp>
      <TaskApp className="w-[61px] border-b-[3px] border-[#94ead9] bg-[#04836c]">
        <div className="-mt-[3px] h-[28px] w-[28px] border-2 border-[#06dd70] bg-[#02231c] text-center font-['Open_Sans'] text-[16px] leading-[23px] font-semibold tracking-[-.5px] text-[#06dd70]">Cp</div>
      </TaskApp>
      <TaskApp className="w-[63px]" open>
        <svg width="29" height="28" viewBox="0 0 29 28"><ellipse cx="12" cy="16" rx="12" ry="5" fill="#7d8f8f" transform="rotate(-15 12 16)" /><ellipse cx="13.500" cy="8" rx="12.500" ry="6.500" fill="#fff" stroke="#d3362b" strokeWidth="1.500" transform="rotate(-18 13.500 8)" /><path d="M9 6l11 12M15 3l3 15" stroke="#9aa4a8" strokeWidth="1.500" /><ellipse cx="23" cy="18" rx="5" ry="2.800" fill="none" stroke="#1780c9" strokeWidth="2" transform="rotate(20 23 18)" /><ellipse cx="17" cy="23" rx="2.600" ry="4.500" fill="none" stroke="#1780c9" strokeWidth="2" transform="rotate(20 17 23)" /></svg>
      </TaskApp>
      <div className="flex h-[50px] flex-1 items-center justify-end font-['Open_Sans'] text-[14.500px]">
        <svg width="17" height="10" viewBox="0 0 17 10" fill="none" stroke="#fff" strokeWidth="1.500"><path d="m.7 9 7.800-8 7.800 8" /></svg>
        <svg className="ml-[22px]" width="21" height="15" viewBox="0 0 21 15" fill="none" stroke="#fff" strokeWidth="1.400"><path d="M7 3h11v9.500H3.500V7M19.500 6v4M1.500 0v3M4.500 0v3M.7 3h4.600v3H.7z" /><path d="M7 5h9v5.500H5.500V8L7 7z" fill="#fff" stroke="none" /></svg>
        <span className="ml-[18px] w-[29px] text-[14px]">ENG</span>
        <div className="ml-[11px] w-[84px] text-center text-[14px] leading-[23px]"><div>10:26</div><div>04-07-2021</div></div>
        <div className="relative ml-[19px] h-[29px] w-[34px]">
          <svg width="21" height="20" viewBox="0 0 21 20"><path d="M0 0h20v17H0z" fill="#fff" /><path d="M4 4.500h12M4 8.500h12M4 12.500h8" stroke="#024b3e" strokeWidth="1.300" /></svg>
          <div className="absolute top-[9px] left-[7px] size-[25px] rounded-full border border-[#5fae9e] bg-[#0b7a68] text-center text-[13px] leading-[23px] font-bold">32</div>
        </div>
        <div className="ml-[11px] h-full w-px bg-[#5b8c82]" />
        <div className="w-[5px]" />
      </div>
    </div>
  );
}

export default function App() {
  return (
    <div className="flex h-[1080px] w-[1920px] flex-col overflow-hidden bg-[#24272e] font-['DejaVu_Sans_Condensed','Noto_Sans',sans-serif]">
      <TitleBar />
      <div className="mr-[7px] flex flex-col">
        <ToolBar />
        <TabStrip />
        <div className="ml-[6px] flex h-[832px]">
          <Filmstrip />
          <Stage />
          <Properties />
        </div>
      </div>
      <StatusBar />
      <TaskBar />
    </div>
  );
}
